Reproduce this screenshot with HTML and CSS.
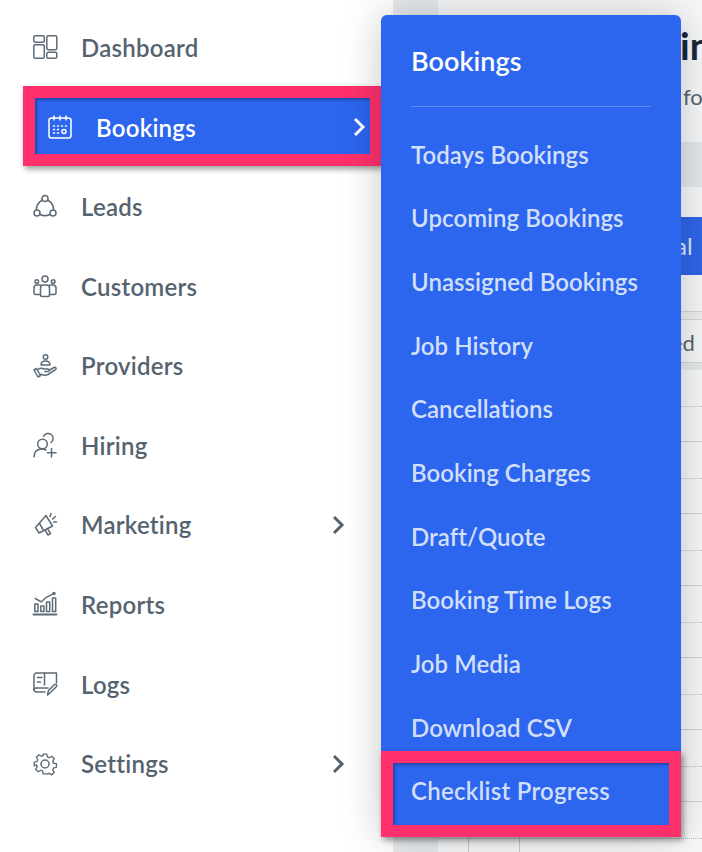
FILE: index.html
```html
<!DOCTYPE html>
<html lang="en">
<head>
    <meta charset="UTF-8">
    <title>Bookings</title>
    <link rel="stylesheet" href="styles.css">
</head>
<body>
<div class="page">
    <ul class="nav">
        <li class="nav-item">
            <svg class="icon" viewBox="0 0 24 24"><rect x="0.800" y="0.800" width="10.500" height="6.500" rx="1.500"/><rect x="0.800" y="9.800" width="10.500" height="13.400" rx="1.500"/><rect x="13.800" y="0.800" width="10" height="14" rx="1.500"/><rect x="13.800" y="17.300" width="10" height="5.900" rx="1.500"/></svg>
            <span>Dashboard</span>
        </li>
        <li class="nav-item active">
            <svg class="icon" viewBox="0 0 24 24"><rect x="1" y="3" width="22" height="20" rx="2.500"/><path d="M6 1v4M12 1v4M18 1v4"/><path d="M5.500 11h1M9.500 11h1M13.500 11h1M17.500 11h1M5.500 14.500h1M9.500 14.500h1M5.500 18h1M9.500 18h1"/><circle cx="16" cy="16.500" r="2"/></svg>
            <span>Bookings</span>
            <svg class="arrow" viewBox="0 0 14 20"><path d="M3 2l8 8-8 8"/></svg>
        </li>
        <li class="nav-item">
            <svg class="icon" viewBox="0 0 24 24"><circle cx="12" cy="3.500" r="3"/><circle cx="4" cy="18" r="3"/><circle cx="20" cy="18" r="3"/><path d="M9.300 5C5.800 7 3.500 10.500 3.300 15M14.700 5c3.500 2 5.800 5.500 6 10M7 19.500Q12 22 17 19.500"/></svg>
            <span>Leads</span>
        </li>
        <li class="nav-item">
            <svg class="icon" viewBox="0 0 24 24"><circle cx="12" cy="5" r="3"/><circle cx="3.800" cy="7.500" r="1.800"/><circle cx="20.200" cy="7.500" r="1.800"/><path d="M7.500 21v-7a3 3 0 0 1 3-3h3a3 3 0 0 1 3 3v7a1.500 1.500 0 0 1-1.500 1.500H9A1.500 1.500 0 0 1 7.500 21z"/><path d="M7.500 20.500H2.500a1.500 1.500 0 0 1-1.500-1.500v-5a3 3 0 0 1 3-3h3.500M16.500 20.500h5a1.500 1.500 0 0 0 1.500-1.500v-5a3 3 0 0 0-3-3h-3.500"/></svg>
            <span>Customers</span>
        </li>
        <li class="nav-item">
            <svg class="icon" viewBox="0 0 24 24"><circle cx="12.500" cy="3" r="2.300"/><path d="M8 11c0-2.500 2-4 4.500-4s4.500 1.500 4.500 4z"/><path d="M1 16l4 7 2.500-1.500-4-7zM5 15.500c2-1.500 4-1.500 6-.5h4c1.500 0 1.500 2.500 0 2.500h-3M16 16.500l5-3c1.800-.7 2.800 1 1.500 2.200L15 20.500c-2 1-4.500.8-6.500 0l-2-.5"/></svg>
            <span>Providers</span>
        </li>
        <li class="nav-item">
            <svg class="icon" viewBox="0 0 24 24"><path d="M10.500 3.500A5 5 0 1 1 18 9.500"/><circle cx="9.500" cy="11" r="4.800"/><path d="M1 24c0-4.500 2.500-7.500 7-8 2-.2 3.500.2 5 1M18.500 15.500v8.500M14.500 19.800h8.500"/></svg>
            <span>Hiring</span>
        </li>
        <li class="nav-item">
            <svg class="icon" viewBox="0 0 24 24"><path d="M13 2.500l6.500 10.500-13.500 7-3.500-5.500z"/><path d="M12 17l3 5 2.500-1.500-3-4.800"/><path d="M6.500 10.500l3.500 6"/><path d="M17 3.500l1-3M19.500 6l3-2.500M20.500 9l3 0"/></svg>
            <span>Marketing</span>
            <svg class="arrow" viewBox="0 0 14 20"><path d="M3 2l8 8-8 8"/></svg>
        </li>
        <li class="nav-item">
            <svg class="icon" viewBox="0 0 24 24"><path class="thick" d="M0.500 21.500h23"/><rect x="1.800" y="11" width="3.200" height="7.500"/><rect x="7.800" y="13" width="3.200" height="5.500"/><rect x="13.500" y="9" width="3.200" height="9.500"/><rect x="19.500" y="5" width="3.200" height="13.500"/><path d="M2.300 5.500l6 3.300 5-4.500 6.700-3.500"/><circle cx="21" cy="0.500" r="1"/></svg>
            <span>Reports</span>
        </li>
        <li class="nav-item">
            <svg class="icon" viewBox="0 0 24 24"><path d="M3.500 16H15M23.500 11V1H3.500A2.500 2.500 0 0 0 1 3.500v14A2.500 2.500 0 0 0 3.500 20H12"/><path d="M1 18a2 2 0 0 1 2.500-2"/><path d="M4.500 5.500H9M4.500 10h3M11.500 1v12"/><path d="M14.500 23l1-4.500 6-6c1-1 3 1 2 2l-6 6z"/></svg>
            <span>Logs</span>
        </li>
        <li class="nav-item">
            <svg class="icon" viewBox="0 0 24 24"><circle cx="12" cy="12" r="4"/><path d="M10 1h4l.7 3.200 2 .9 2.800-1.700 2.800 2.800-1.700 2.800.9 2 3.200.7v4l-3.200.7-.9 2 1.700 2.800-2.800 2.800-2.800-1.700-2 .9L14 23h-4l-.7-3.200-2-.9-2.800 1.700-2.800-2.800 1.700-2.800-.9-2L0 14v-4l3.200-.7.9-2-1.700-2.800 2.800-2.800 2.800 1.700 2-.9z" transform="translate(1.200 1.200) scale(.9)"/></svg>
            <span>Settings</span>
            <svg class="arrow" viewBox="0 0 14 20"><path d="M3 2l8 8-8 8"/></svg>
        </li>
    </ul>
    <div class="strip"></div>
    <div class="content">
        <h1 class="title">in</h1>
        <p class="sub">for</p>
        <div class="band"></div>
        <div class="btn">al</div>
        <div class="thead">ed</div>
        <div class="row"></div>
        <div class="row"></div>
        <div class="row"></div>
        <div class="row"></div>
        <div class="row"></div>
        <div class="row"></div>
        <div class="row"></div>
    </div>
    <div class="sub-menu">
        <div class="sub-title">Bookings</div>
        <a class="sub-item">Todays Bookings</a>
        <a class="sub-item">Upcoming Bookings</a>
        <a class="sub-item">Unassigned Bookings</a>
        <a class="sub-item">Job History</a>
        <a class="sub-item">Cancellations</a>
        <a class="sub-item">Booking Charges</a>
        <a class="sub-item">Draft/Quote</a>
        <a class="sub-item">Booking Time Logs</a>
        <a class="sub-item">Job Media</a>
        <a class="sub-item">Download CSV</a>
        <a class="sub-item marked">Checklist Progress</a>
    </div>
</div>
</body>
</html>
```

FILE: styles.css
```css
*{
    box-sizing: border-box;
}
html,body{
    margin: 0;
    height: 100%;
    overflow: hidden;
}
body{
    font-family: Lato, "Liberation Sans", sans-serif;
    background: #fff;
}
.page{
    position: relative;
    display: flex;
    width: 702px;
    height: 852px;
    overflow: hidden;
}

/* left menu */
.nav{
    width: 393px;
    flex: none;
    margin: 0;
    padding: 7.600px 0 0;
    list-style: none;
}
.nav-item{
    display: flex;
    align-items: center;
    height: 79.600px;
    padding-left: 33px;
    padding-right: 48px;
    font-size: 24px;
    font-weight: 600;
    letter-spacing: .25px;
    color: #55636f;
}
.nav-item span{
    margin-left: 24px;
    flex: 1;
}
.icon{
    width: 24px;
    height: 24px;
    flex: none;
    overflow: visible;
    fill: none;
    stroke: #5d6b77;
    stroke-width: 1.500;
    stroke-linejoin: round;
    stroke-linecap: round;
}
.icon .thick{
    stroke-width: 2;
}
.arrow{
    width: 14px;
    height: 20px;
    flex: none;
    fill: none;
    stroke: #55636f;
    stroke-width: 3;
}
.nav-item.active{
    position: relative;
    z-index: 1;
    width: 359px;
    margin: -1.200px 0 1.200px 23px;
    padding: 3px 4px 0 13px;
    border: 12px solid #ff306c;
    background: #2c65ee;
    color: #fff;
    box-shadow: 2px 3px 6px rgba(0,0,0,.4), inset 2px 2px 3px rgba(0,0,0,.3);
}
.active .icon,
.active .arrow{
    stroke: #fff;
}

/* what shows behind the menus */
.strip{
    width: 45px;
    flex: none;
    background: #e6eaee;
}
.content{
    flex: 1;
    padding-left: 245px;
    min-width: 0;
    background: #f7f8f9;
    color: #55636f;
    overflow: hidden;
}
.title{
    height: 84px;
    margin: 0 0 0 -3px;
    padding-top: 25px;
    font-size: 38px;
    line-height: 40px;
    font-weight: 700;
    color: #17283a;
}
.sub{
    height: 58px;
    margin: 0;
    padding-top: 1px;
    font-size: 22px;
    line-height: 24px;
}
.band{
    height: 45px;
    margin: 0 0 30px -245px;
    background: #e4e8ec;
}
.btn{
    height: 58px;
    margin: 0 0 36px -245px;
    padding-left: 237px;
    background: #2f66e8;
    color: #dfe7fb;
    font-size: 24px;
    line-height: 58px;
}
.thead{
    height: 59px;
    margin-left: -245px;
    padding-left: 233px;
    border-top: 1px solid #d5d8db;
    border-bottom: 7px solid #e6eaea;
    font-size: 22px;
    line-height: 62px;
    box-shadow: inset 0 7px 0 #eef0f0, inset 0 8px 0 #d5d8db, inset 0 -1px 0 #d5d8db;
}
.row{
    height: 72px;
    margin-left: -245px;
    border-bottom: 1px solid #cfd2d5;
    background:
        linear-gradient(#c9ccd0,#c9ccd0) 30px 0 / 1px 100% no-repeat,
        linear-gradient(#c9ccd0,#c9ccd0) 81px 0 / 1px 100% no-repeat;
}
.row::after{
    content: "";
    display: block;
    height: 36px;
    border-bottom: 1px dotted #b9bcc0;
}

/* flyout */
.sub-menu{
    position: absolute;
    top: 15px;
    left: 381px;
    z-index: 2;
    display: flex;
    flex-direction: column;
    width: 300px;
    height: 822px;
    border-radius: 6px 6px 0 0;
    background: #2c65ee;
    box-shadow: 0 0 40px rgba(0,0,0,.22);
}
.sub-title{
    height: 93px;
    margin: 0 30px 15.200px;
    padding-top: 27px;
    border-bottom: 1px solid rgba(255,255,255,.25);
    font-size: 27px;
    line-height: 38px;
    font-weight: 600;
    letter-spacing: .05px;
    color: #fff;
}
.sub-item{
    display: block;
    height: 63.700px;
    padding-left: 30px;
    font-size: 24px;
    line-height: 63.700px;
    font-weight: 600;
    letter-spacing: .05px;
    color: #d2dffb;
}
.sub-item.marked{
    position: relative;
    height: 87px;
    margin-top: -9px;
    padding-left: 18px;
    border: 12px solid #ff306c;
    letter-spacing: .25px;
    line-height: 56px;
    box-shadow: 2px 3px 6px rgba(0,0,0,.4), inset 2px 2px 3px rgba(0,0,0,.3);
}
```
